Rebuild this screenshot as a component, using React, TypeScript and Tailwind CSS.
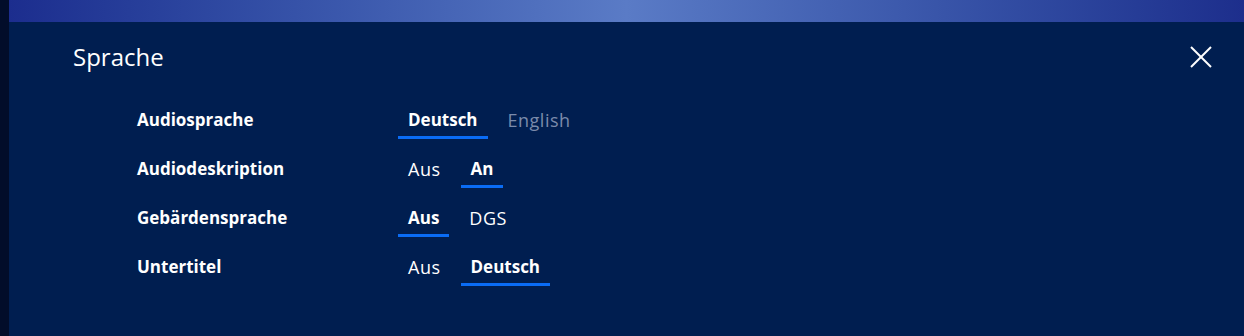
import React from "react"

type Option = {
  label: string
  selected?: boolean
  disabled?: boolean
}

type Setting = {
  name: string
  options: Option[]
}

const settings: Setting[] = [
  { name: "Audiosprache", options: [{ label: "Deutsch", selected: true }, { label: "English", disabled: true }] },
  { name: "Audiodeskription", options: [{ label: "Aus" }, { label: "An", selected: true }] },
  { name: "Gebärdensprache", options: [{ label: "Aus", selected: true }, { label: "DGS" }] },
  { name: "Untertitel", options: [{ label: "Aus" }, { label: "Deutsch", selected: true }] },
]

const OptionButton = ({ option }: { option: Option }) => {
  let tone = "text-white text-[18px] font-normal tracking-[0.5px] border-transparent"
  if (option.selected) tone = "text-white text-[17px] font-bold border-[#0a6cf5]"
  else if (option.disabled) tone = "text-[#7b8bab] text-[18px] font-normal tracking-[0.5px] border-transparent"
  return (
    <button className={"px-[10px] pb-[4px] border-b-[3px] leading-[24px] " + tone}>
      {option.label}
    </button>
  )
}

export default function App() {
  return (
    <div
      className="flex h-[336px] w-[1244px] overflow-hidden"
      style={{ fontFamily: '"Open Sans", "Noto Sans", sans-serif' }}
    >
      <div className="w-[9px] shrink-0 bg-[#020d2a]" />
      <div className="flex flex-1 flex-col">
        <div className="h-[22px] shrink-0 bg-gradient-to-r from-[#1c2d8e] via-[#5a7bc6] to-[#1d2e8c]" />
        <div className="flex-1 bg-[#001e50]">
          <div className="flex items-center justify-between pl-[64px] pr-[32px] pt-[19px]">
            <h2 className="text-[24px] leading-[32px] text-white">Sprache</h2>
            <button aria-label="Schließen" className="text-white">
              <svg width="22" height="22" viewBox="0 0 22 22" fill="none" stroke="currentColor" strokeWidth="2">
                <line x1="1" y1="1" x2="21" y2="21" />
                <line x1="21" y1="1" x2="1" y2="21" />
              </svg>
            </button>
          </div>
          <div className="mt-[35px] flex flex-col pl-[128px]">
            {settings.map((s) => (
              <div key={s.name} className="flex h-[49px] items-start">
                <div className="w-[261px] text-[17px] font-bold leading-[24px] text-white">{s.name}</div>
                <div className="flex gap-[10px]">
                  {s.options.map((o) => (
                    <OptionButton key={o.label} option={o} />
                  ))}
                </div>
              </div>
            ))}
          </div>
        </div>
      </div>
    </div>
  )
}
